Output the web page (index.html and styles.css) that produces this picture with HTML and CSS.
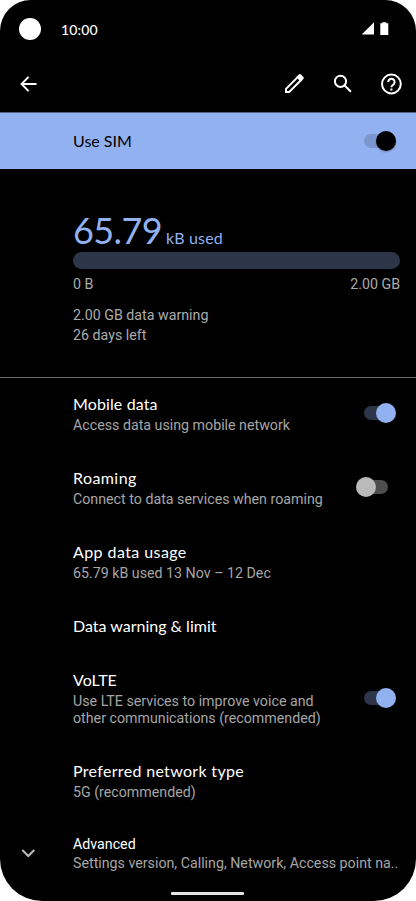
FILE: index.html
```html
<!DOCTYPE html>
<html lang="en">
<head>
<meta charset="utf-8">
<title>Mobile network</title>
<link rel="stylesheet" href="styles.css">
</head>
<body>
<main class="phone">
  <header class="status">
    <span class="camera"></span>
    <span class="clock">10:00</span>
    <svg class="signals" width="30" height="16" viewBox="0 0 30 16"><path d="M13 1.2V13.5H.7Z"/><path d="M21.3 2.2V1.2h4v1h2v11.7h-8V2.2Z"/></svg>
  </header>
  <nav class="toolbar">
    <svg class="back" width="24" height="24" viewBox="0 0 24 24"><path d="M20.5 12H5.7M12.6 4.9 5.6 12l7 7.1"/></svg>
    <svg class="edit" width="24" height="24" viewBox="0 0 24 24"><path class="line" d="M4 20v-3.2L15.7 5.1l3.2 3.2L7.2 20Z"/><path class="solid" d="m14.3 5 2.5-2.5q1.1-1 2.2 0l2.4 2.4q1 1.1 0 2.2L18.9 9.6Z"/></svg>
    <svg class="find" width="24" height="24" viewBox="0 0 24 24"><circle cx="9.5" cy="9.3" r="5.6"/><path d="m13.7 13.5 6.2 6.2"/></svg>
    <svg class="help" width="24" height="24" viewBox="0 0 24 24"><circle cx="12.4" cy="12" r="9.4"/><path d="M9.2 10a3.2 3.2 0 1 1 5.6 2.1c-1.2 1.2-2.4 1.6-2.4 3.1M12.4 16.4v2"/></svg>
  </nav>
  <section class="use">
    <h1 class="title">Use SIM</h1>
    <span class="switch dark"></span>
  </section>
  <section class="usage">
    <p class="amount"><span class="number">65.79</span><span class="unit">kB used</span></p>
    <div class="bar"></div>
    <div class="range"><span>0 B</span><span>2.00 GB</span></div>
    <p class="note">2.00 GB data warning<br>26 days left</p>
  </section>
  <section class="list">
    <div class="row"><div><h2 class="title snug">Mobile data</h2><p class="sub">Access data using mobile network</p></div><span class="switch on"></span></div>
    <div class="row"><div><h2 class="title wide">Roaming</h2><p class="sub">Connect to data services when roaming</p></div><span class="switch off"></span></div>
    <div class="row"><div><h2 class="title wide">App data usage</h2><p class="sub">65.79 kB used 13 Nov – 12 Dec</p></div></div>
    <div class="row short"><h2 class="title">Data warning &amp; limit</h2></div>
    <div class="row tall"><div><h2 class="title">VoLTE</h2><p class="sub">Use LTE services to improve voice and<br>other communications (recommended)</p></div><span class="switch on"></span></div>
    <div class="row network"><div><h2 class="title medium">Preferred network type</h2><p class="sub">5G (recommended)</p></div></div>
    <div class="row advanced"><svg class="chevron" width="16" height="16" viewBox="0 0 16 16"><path d="m2.3 5 6 6 6-6"/></svg><div><h2 class="small">Advanced</h2><p class="sub">Settings version, Calling, Network, Access point na..</p></div></div>
  </section>
  <span class="handle"></span>
</main>
</body>
</html>
```
FILE: styles.css
```css
* { box-sizing: border-box; }
body { margin: 0; background: #fff; }
h1, h2, p { margin: 0; font-weight: 400; }
svg { display: block; flex: none; }
.phone {
  width: 416px; height: 901px; overflow: hidden; position: relative;
  background: #000; border-radius: 31px 31px 42px 42px;
  display: flex; flex-direction: column;
  font-family: Roboto, sans-serif; color: #fff;
}
.status { height: 58px; flex: none; display: flex; align-items: center; padding: 0 25px 0 19px; }
.camera { width: 22px; height: 22px; border-radius: 50%; background: #fff; }
.clock { margin-left: 20px; font: 500 14px Lato, sans-serif; letter-spacing: .15px; }
.signals { margin-left: auto; fill: #fff; }
.toolbar { height: 54px; flex: none; display: flex; align-items: center; padding: 0 13px 2px 16px; }
.toolbar svg { fill: none; stroke: #fff; stroke-width: 2; }
.toolbar .solid { fill: #fff; stroke: none; }
.edit { margin-left: auto; }
.find { margin-left: 25px; }
.help { margin-left: 24px; }
.use {
  height: 57px; flex: none; display: flex; align-items: center; justify-content: space-between;
  padding: 0 20px 0 73px; background: #91b1f1; border-top: 1px solid #52648a; color: #000;
}
.title { font: 400 16px/22px Lato, sans-serif; white-space: nowrap; }
.snug { letter-spacing: .12px; }
.medium { letter-spacing: .32px; }
.wide { letter-spacing: .42px; }
.switch { width: 32px; height: 20px; flex: none; display: flex; align-items: center; position: relative; }
.switch::before { content: ""; width: 24px; height: 14px; border-radius: 7px; background: #2c3648; }
.switch::after { content: ""; position: absolute; right: 0; top: 0; width: 20px; height: 20px; border-radius: 50%; background: #91b1f1; }
.dark::before { background: #7c97cf; }
.dark::after { background: #000; box-shadow: 0 1px 2px #0004; }
.off { justify-content: flex-end; margin-right: 8px; }
.off::before { background: #4d4d4d; }
.off::after { right: auto; left: 0; background: #bababa; }
.usage { height: 209px; flex: none; padding: 37px 16px 0 73px; border-bottom: 1px solid #6b6b6b; color: #ababab; font-size: 14.22px; }
.amount { height: 46px; display: flex; align-items: baseline; gap: 4px; color: #91b1f1; font-family: Lato, sans-serif; white-space: nowrap; }
.number { font-size: 36px; line-height: 48px; letter-spacing: -.6px; }
.unit { font-size: 16px; letter-spacing: .15px; }
.bar { height: 17px; border-radius: 9px; background: #2c3648; }
.range { display: flex; justify-content: space-between; height: 30px; line-height: 30px; }
.note { line-height: 20px; padding-top: 6px; }
.list { flex: none; margin-top: -1px; }
.row { height: 74px; display: flex; align-items: center; justify-content: space-between; padding: 0 20px 0 73px; }
.row .switch { margin-bottom: 2px; }
.sub { color: #a6a6a6; font-size: 14.22px; line-height: 17px; white-space: nowrap; }
.row .title { margin: -1px 0 2px; }
.row.short { height: 54px; }
.row.short .title { margin: 0; }
.row.tall { height: 91px; }
.tall .switch { margin-bottom: 1px; }
.network { height: 73px; }
.advanced { height: 71px; padding-left: 20px; justify-content: flex-start; }
.chevron { fill: none; stroke: #bababa; stroke-width: 2; margin-right: 37px; }
.small { font-size: 14.22px; line-height: 20px; margin-bottom: 1px; }
.handle { position: absolute; left: 171px; bottom: 6px; width: 73px; height: 3px; border-radius: 1px; background: #e4e4e4; }
```
